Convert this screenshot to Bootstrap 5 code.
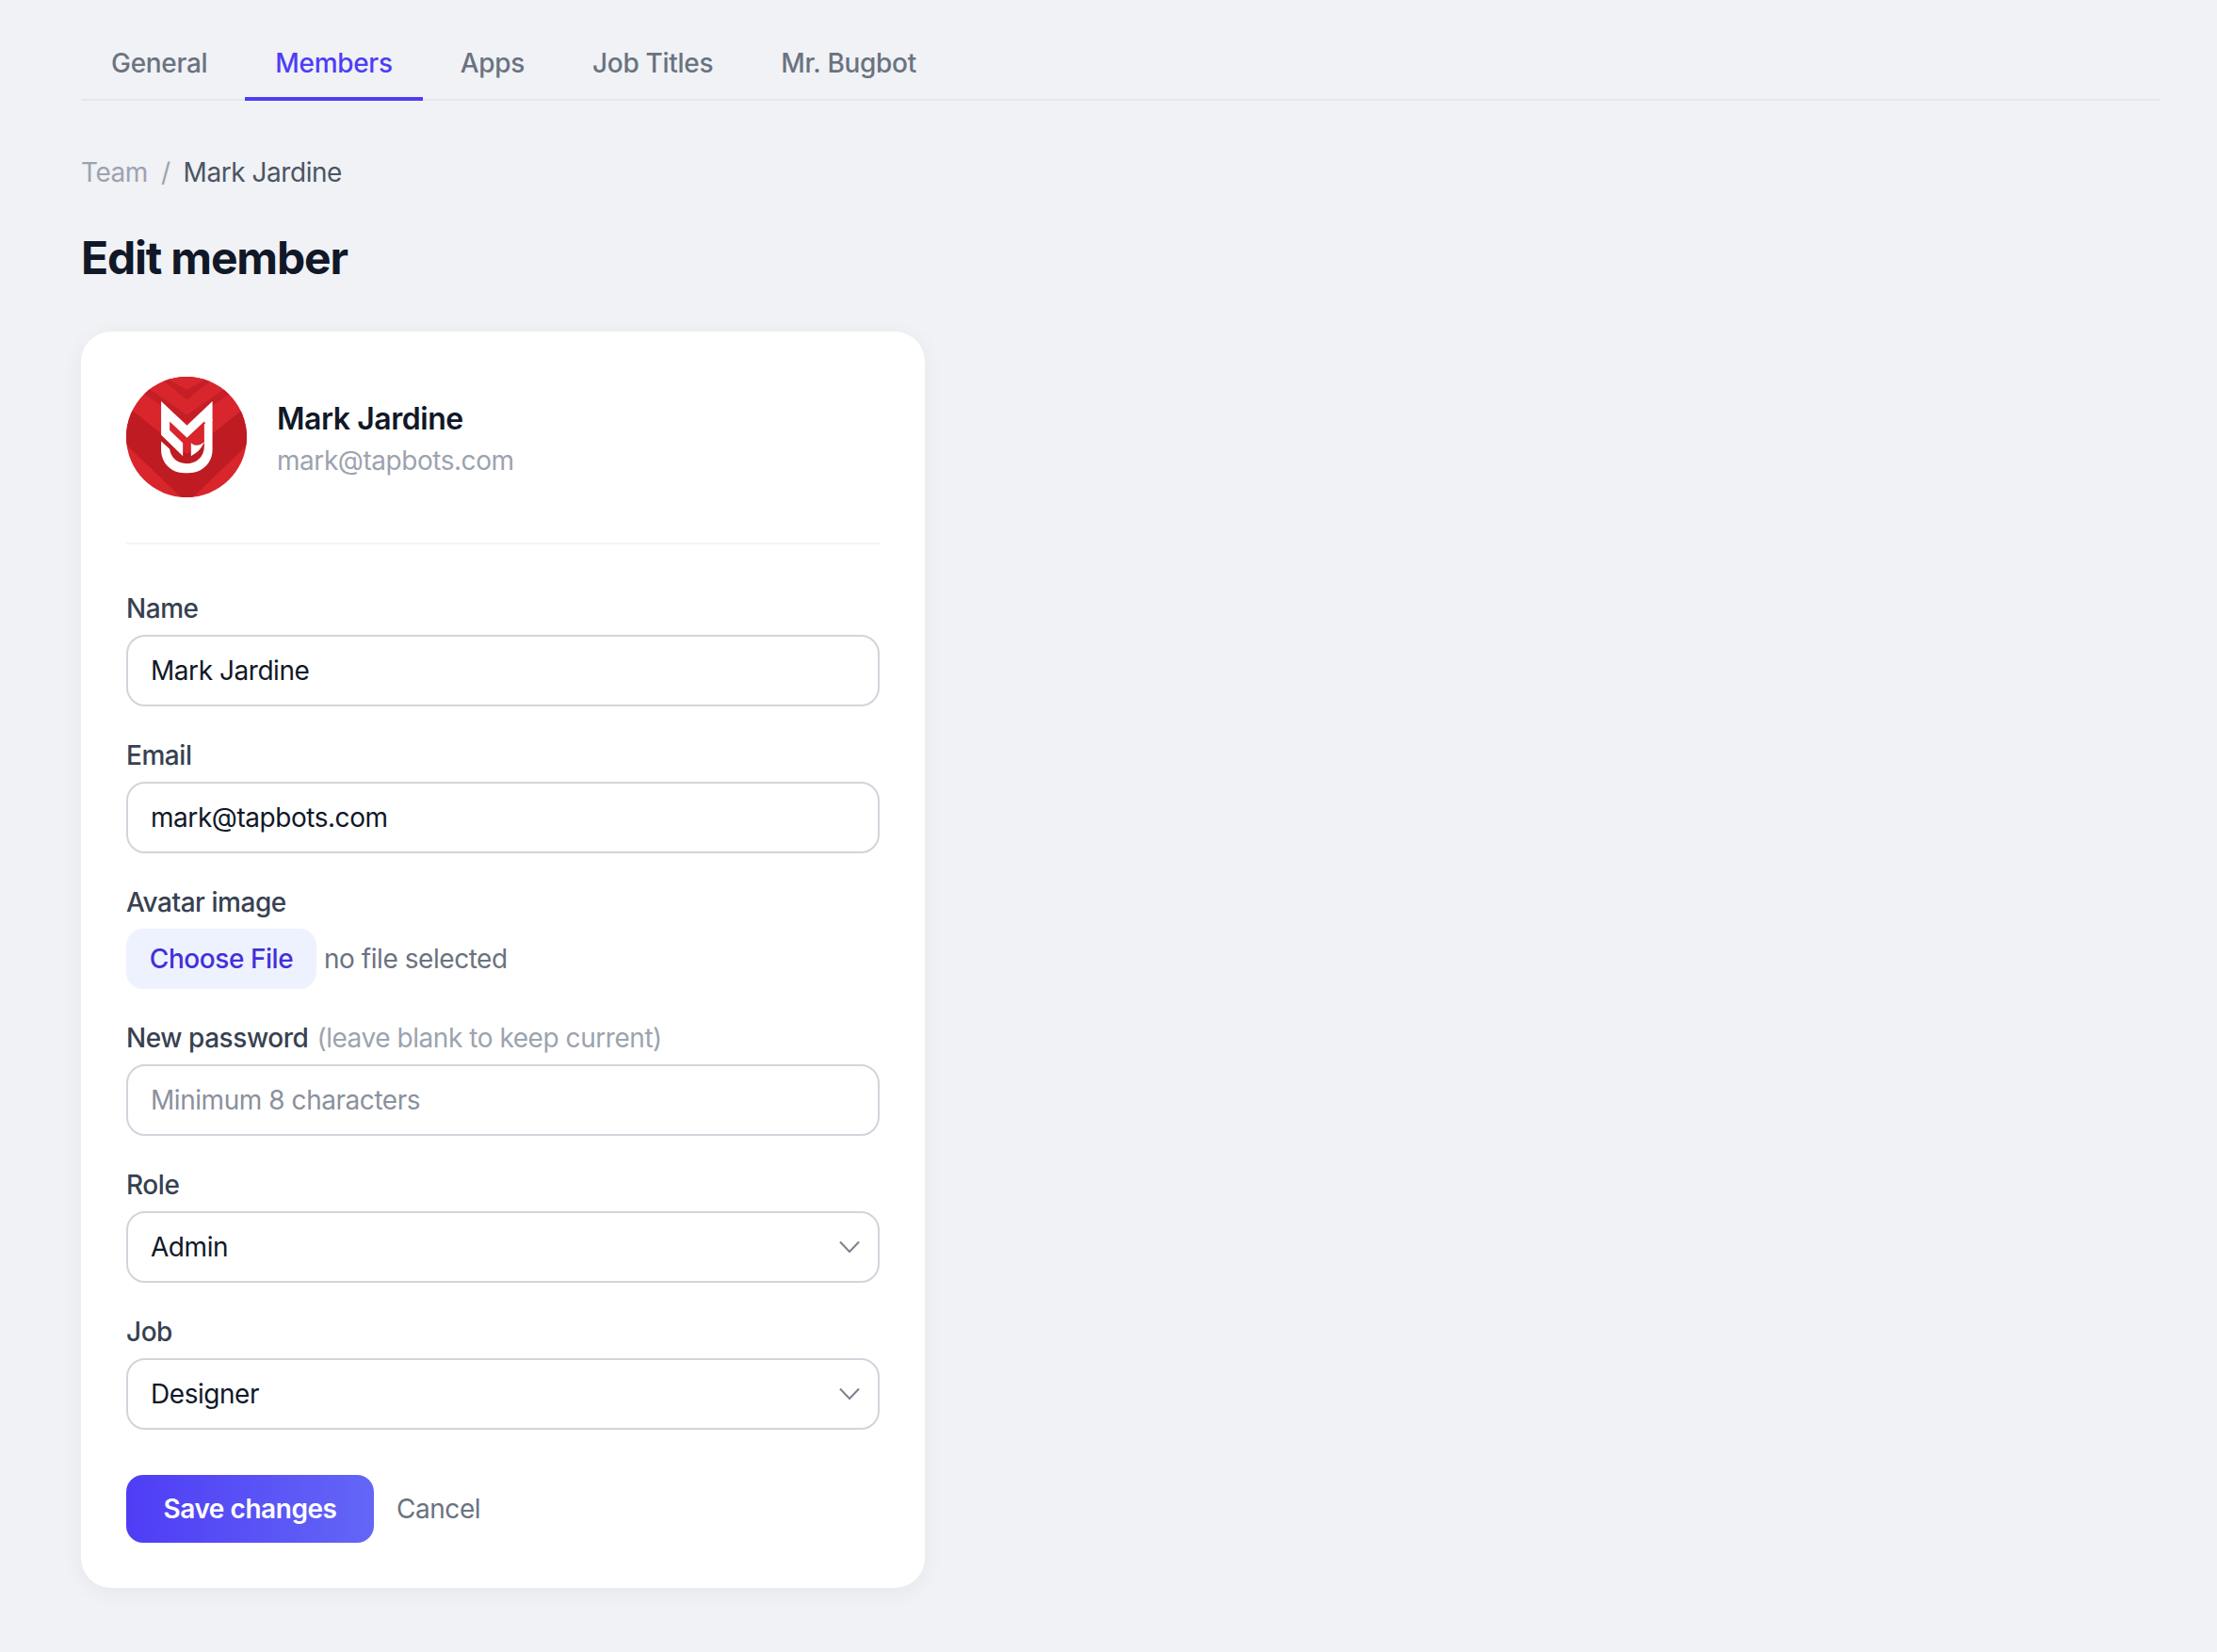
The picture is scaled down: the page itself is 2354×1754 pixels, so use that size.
<!DOCTYPE html>
<html>
  <head>
    <title>Edit member</title>
    <link href="https://cdn.jsdelivr.net/npm/bootstrap@5.3.3/dist/css/bootstrap.min.css" rel="stylesheet" />
    <script src="https://cdn.jsdelivr.net/npm/bootstrap@5.3.3/dist/js/bootstrap.bundle.min.js"></script>
    <style>
      body {
        background: #f0f2f6;
        font-family: "Inter", "Liberation Sans", sans-serif;
        font-size: 28px;
        letter-spacing: -0.45px;
        color: #374151;
      }
      .page-wrap { padding: 0 60px 68px 86px; }
      .tab-bar { border-bottom: 2px solid #e5e7eb; gap: 8px; padding-top: 31px; }
      .tab-bar .nav-link {
        font-size: 28px;
        letter-spacing: -0.3px;
        font-weight: 500;
        line-height: 36px;
        color: #6b7280;
        padding: 18px 32px 18px;
        margin-bottom: -2px;
        border-bottom: 4px solid transparent;
      }
      .tab-bar .nav-link.active { color: #4f3df5; border-bottom-color: #4f3df5; }
      .crumbs { margin: 57px 0 0; font-size: 28px; line-height: 38px; --bs-breadcrumb-item-padding-x: 14px; }
      .crumbs a { color: #9ca3af; text-decoration: none; }
      .crumbs .breadcrumb-item.active { color: #4b5563; }
      .crumbs .breadcrumb-item + .breadcrumb-item::before { color: #9ca3af; }
      .page-title { font-size: 48px; line-height: 58px; font-weight: 700; letter-spacing: -1.2px; color: #111827; margin: 43px 0 49px; }
      .member-card {
        width: 896px;
        border: 0;
        border-radius: 32px;
        padding: 48px;
        box-shadow: 0 4px 24px rgba(17, 24, 39, 0.05);
      }
      .member-head { gap: 32px; padding-bottom: 48px; border-bottom: 2px solid #f3f4f6; margin-bottom: 50px; }
      .member-pic { width: 128px; height: 128px; display: block; flex: none; }
      .member-info { padding-top: 6px; }
      .member-name { font-size: 32px; line-height: 44px; font-weight: 600; color: #111827; }
      .member-mail { font-size: 28px; line-height: 45px; color: #9ca3af; }
      .field { margin-bottom: 34px; }
      .field .form-label { font-size: 28px; line-height: 36px; font-weight: 500; color: #374151; margin-bottom: 10px; display: block; }
      .field .form-label span { font-weight: 400; color: #9ca3af; margin-left: 2px; }
      .field .form-control, .field .form-select {
        height: 76px;
        font-size: 28px;
        letter-spacing: -0.45px;
        color: #111827;
        padding: 0 24px;
        border: 2px solid #d1d5db;
        border-radius: 20px;
      }
      .field .form-control::placeholder { color: #8b919c; }
      .field .form-select {
        background-image: url("data:image/svg+xml,%3csvg xmlns='http://www.w3.org/2000/svg' viewBox='0 0 24 24'%3e%3cpath fill='none' stroke='%237b8290' stroke-width='2' d='M2 6.5 12 17 22 6.5'/%3e%3c/svg%3e");
        background-position: right 18px center;
        background-size: 24px 24px;
      }
      .file-row { gap: 8px; }
      .file-btn {
        font-size: 28px;
        letter-spacing: -0.45px;
        font-weight: 500;
        width: 202px;
        height: 64px;
        padding: 0;
        border: 0;
        border-radius: 18px;
        background: #eef2ff;
        color: #4330d8;
      }
      .file-note { font-size: 28px; color: #6b7280; }
      .actions { gap: 16px; margin-top: 48px; }
      .save-btn {
        font-size: 28px;
        letter-spacing: -0.45px;
        font-weight: 600;
        width: 263px;
        height: 72px;
        padding: 0;
        border: 0;
        border-radius: 18px;
        color: #fff;
        background: linear-gradient(90deg, #4f3df5, #6366f7);
      }
      .cancel-btn { font-size: 28px; color: #6b7280; text-decoration: none; padding: 0 8px; }
    </style>
  </head>
  <body>
    <div class="page-wrap">
      <ul class="nav tab-bar">
        <li class="nav-item"><a class="nav-link" href="#">General</a></li>
        <li class="nav-item"><a class="nav-link active" href="#">Members</a></li>
        <li class="nav-item"><a class="nav-link" href="#">Apps</a></li>
        <li class="nav-item"><a class="nav-link" href="#">Job Titles</a></li>
        <li class="nav-item"><a class="nav-link" href="#">Mr. Bugbot</a></li>
      </ul>

      <ol class="breadcrumb crumbs">
        <li class="breadcrumb-item"><a href="#">Team</a></li>
        <li class="breadcrumb-item active">Mark Jardine</li>
      </ol>

      <h1 class="page-title">Edit member</h1>

      <div class="card member-card">
        <div class="d-flex align-items-center member-head">
          <svg class="member-pic" viewBox="42 30 383 383" aria-hidden="true">
            <defs><clipPath id="avatarClip"><circle cx="233.5" cy="221.5" r="191.5" /></clipPath></defs>
            <g clip-path="url(#avatarClip)">
              <rect x="42" y="30" width="383" height="383" fill="#d9252c" />
              <path d="M0 89 235 275 470 89V205L235 431 0 205Z" fill="#bf1b22" />
              <path d="M40 30 235 165 430 30" fill="none" stroke="#c41f27" stroke-width="22" />
              <path d="M150 18 235 88 320 18" fill="none" stroke="#c41f27" stroke-width="24" />
              <path d="M160 30 235 72 310 30" fill="#d9252c" />
            </g>
            <path fill="#fff" d="M153 108 235 185 316 108V170L296 182 290 172 235 224 180 172V200L222 240V282L153 215Z" />
            <path fill="#fff" d="M153 235 180 260C184 288 205 306 234 306 262 306 290 288 290 250V180L316 165V262C316 305 282 336 240 336H228C186 336 153 305 153 262Z" />
            <path fill="#fff" d="M248 240V282C268 272 282 258 290 236 276 250 262 252 248 240Z" />
          </svg>
          <div class="member-info">
            <div class="member-name">Mark Jardine</div>
            <div class="member-mail">mark@tapbots.com</div>
          </div>
        </div>

        <form>
          <div class="field">
            <label class="form-label" for="memberName">Name</label>
            <input class="form-control" id="memberName" type="text" value="Mark Jardine" />
          </div>
          <div class="field">
            <label class="form-label" for="memberEmail">Email</label>
            <input class="form-control" id="memberEmail" type="email" value="mark@tapbots.com" />
          </div>
          <div class="field">
            <label class="form-label">Avatar image</label>
            <div class="d-flex align-items-center file-row">
              <button type="button" class="btn file-btn">Choose File</button>
              <span class="file-note">no file selected</span>
            </div>
          </div>
          <div class="field">
            <label class="form-label" for="memberPass">New password <span>(leave blank to keep current)</span></label>
            <input class="form-control" id="memberPass" type="password" placeholder="Minimum 8 characters" />
          </div>
          <div class="field">
            <label class="form-label" for="memberRole">Role</label>
            <select class="form-select" id="memberRole">
              <option>Admin</option>
            </select>
          </div>
          <div class="field">
            <label class="form-label" for="memberJob">Job</label>
            <select class="form-select" id="memberJob">
              <option>Designer</option>
            </select>
          </div>
          <div class="d-flex align-items-center actions">
            <button type="button" class="btn save-btn">Save changes</button>
            <a class="cancel-btn" href="#">Cancel</a>
          </div>
        </form>
      </div>
    </div>
  </body>
</html>
